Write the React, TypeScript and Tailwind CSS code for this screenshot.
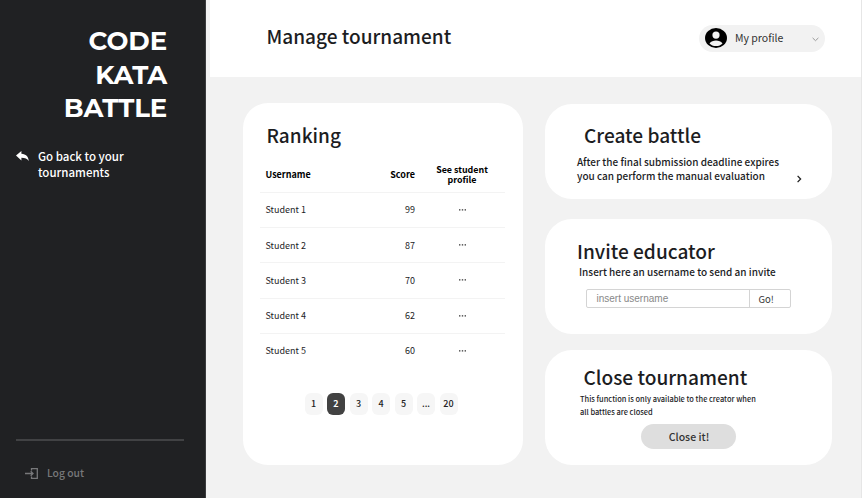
import type { ReactNode } from "react";

const students = [
  { name: "Student 1", score: 99 },
  { name: "Student 2", score: 87 },
  { name: "Student 3", score: 70 },
  { name: "Student 4", score: 62 },
  { name: "Student 5", score: 60 },
];

const pages = ["1", "2", "3", "4", "5", "...", "20"];

function Sidebar() {
  return (
    <aside className="flex h-full w-[206px] shrink-0 flex-col border-r border-[#3b3c3e] bg-[#202123]">
      <h1 className="pt-[25px] pr-[38px] text-right font-['Montserrat','Inter',sans-serif] text-[26px] leading-[33.5px] font-bold text-white">
        <div className="tracking-[-0.1px]">CODE</div>
        <div className="tracking-[-0.2px]">KATA</div>
        <div className="tracking-[-0.2px]">BATTLE</div>
      </h1>
      <a className="mt-[22px] flex pl-[16px] text-white">
        <svg className="mt-[3px] h-[11px] w-[13px]" viewBox="0 0 13 11" fill="currentColor">
          <path d="M0 4.6 5.4 0v2.7C10 3.1 12.3 5.3 12.8 10 11.2 7.6 9.1 6.7 5.4 6.7v2.8Z" />
        </svg>
        <span className="ml-[9px] text-[11.5px] leading-[16px] font-medium">
          Go back to your
          <br />
          tournaments
        </span>
      </a>
      <div className="mt-auto ml-[16px] h-[2px] w-[168px] bg-[#414244]" />
      <a className="mt-[23px] mb-[16px] flex h-[18px] items-center pl-[25px] text-[#77787a]">
        <svg className="h-[11px] w-[13px]" viewBox="0 0 13 11" fill="none" stroke="currentColor" strokeWidth="1.3">
          <path d="M0 5.5h8M5.7 3.2 8 5.5 5.7 7.8M6.5 2.5V.7h5.8v9.6H6.5V8.5" />
        </svg>
        <span className="ml-[9px] text-[10.3px] leading-[18px] font-medium">Log out</span>
      </a>
    </aside>
  );
}

function Header() {
  return (
    <header className="ml-[4px] flex h-[77px] shrink-0 items-start justify-between bg-white pr-[36px] pl-[56.5px]">
      <h2 className="pt-[21px] text-[19.05px] leading-[30px] font-medium">Manage tournament</h2>
      <button className="mt-[25px] flex h-[27px] w-[126px] items-center rounded-full bg-[#f2f2f2] pr-[6px] pl-[6px]">
        <svg className="-mt-px h-[20px] w-[22px]" viewBox="0 0 22 20" preserveAspectRatio="none">
          <ellipse cx="11" cy="10" rx="11" ry="10" fill="#000" />
          <circle cx="11" cy="7.1" r="3.6" fill="#f2f2f2" />
          <path d="M4.5 15.4c1.5-1.9 4-2.8 6.5-2.8s5 .9 6.5 2.8c-1.5 1.7-3.8 2.6-6.5 2.6s-5-.9-6.5-2.6Z" fill="#f2f2f2" />
        </svg>
        <span className="-mt-[2px] ml-[8px] text-[10.5px] leading-[18px] text-[#333]">My profile</span>
        <svg className="mt-px ml-auto h-[5px] w-[7px]" viewBox="0 0 7 5" fill="none" stroke="#999" strokeWidth="1">
          <path d="m.6.9 2.9 2.8L6.4.9" />
        </svg>
      </button>
    </header>
  );
}

function Dots() {
  return (
    <svg className="mx-auto h-[2px] w-[7px]" viewBox="0 0 7 2" fill="#333">
      <path d="M0 .3h1.4v1.3H0ZM2.8.3h1.4v1.3H2.8ZM5.6.3H7v1.3H5.6Z" />
    </svg>
  );
}

function Ranking() {
  return (
    <section className="flex h-[362px] w-[280px] flex-col rounded-[25px] bg-white">
      <h2 className="pt-[17px] pl-[23.5px] text-[19px] leading-[30px] font-medium">Ranking</h2>
      <div className="mt-[8px] ml-[17px] w-[245px] text-[9px]">
        <div className="grid h-[35px] grid-cols-[95px_60px_90px] items-center border-b border-[#f3f3f3] font-bold text-black">
          <span className="pl-[5.5px]">Username</span>
          <span className="text-right">Score</span>
          <span className="pl-[4px] text-center text-[8.9px] leading-[10px]">
            See student
            <br />
            profile
          </span>
        </div>
        {students.map((s) => (
          <div
            key={s.name}
            className="grid h-[35.2px] grid-cols-[95px_60px_90px] items-center border-b border-[#f3f3f3] last:border-transparent"
          >
            <span className="pl-[5.5px]">{s.name}</span>
            <span className="text-right">{s.score}</span>
            <span className="pl-[4px]">
              <Dots />
            </span>
          </div>
        ))}
      </div>
      <div className="mt-[24px] flex gap-[4.5px] pl-[61.5px]">
        {pages.map((p) => (
          <button
            key={p}
            className={
              p === "2"
                ? "h-[22px] w-[18px] rounded-[6px] bg-[#424242] text-[9px] font-bold text-white"
                : "h-[22px] w-[18px] rounded-[6px] bg-[#f6f6f6] text-[9px] font-medium text-[#222]"
            }
          >
            {p}
          </button>
        ))}
      </div>
    </section>
  );
}

function Card({ className, children }: { className: string; children: ReactNode }) {
  return <section className={`w-[287px] rounded-[27px] bg-white ${className}`}>{children}</section>;
}

export default function App() {
  return (
    <div className="flex h-[498px] w-[862px] overflow-hidden bg-[#f2f2f2] font-['Noto_Sans_CJK_SC',sans-serif] text-[#1c1d1f]">
      <Sidebar />
      <main className="flex min-w-0 flex-1 flex-col border-r border-[#e6e6e6]">
        <Header />
        <div className="flex pt-[26px] pl-[37px]">
          <Ranking />
          <div className="ml-[22px] flex flex-col pt-px">
            <Card className="h-[95px]">
              <h2 className="pt-[16px] pl-[39px] text-[19.1px] leading-[30px] font-medium">Create battle</h2>
              <div className="flex pt-[5px] pl-[32px]">
                <p className="w-[220px] text-[10px] leading-[14px] font-medium whitespace-nowrap">
                  After the final submission deadline expires
                  <br />
                  you can perform the manual evaluation
                </p>
                <svg className="mt-[20px] h-[8px] w-[5px]" viewBox="0 0 5 8" fill="none" stroke="#222" strokeWidth="1.3">
                  <path d="m.6.9 3 3.1-3 3.1" />
                </svg>
              </div>
            </Card>
            <Card className="mt-[20px] h-[115px]">
              <h2 className="pt-[17px] pl-[32px] text-[19.1px] leading-[30px] font-medium">Invite educator</h2>
              <p className="pl-[34px] text-[10px] leading-[12px] font-medium">Insert here an username to send an invite</p>
              <div className="mt-[11px] ml-[40.5px] flex h-[19px] w-[205px] rounded-[2px] border border-[#d4d4d4]">
                <span className="w-[163px] border-r border-[#d4d4d4] pl-[10px] font-['Liberation_Sans',sans-serif] text-[10px] leading-[18px] text-[#888]">
                  insert username
                </span>
                <button className="pl-[9px] text-[9.5px] leading-[12px] text-[#333]">Go!</button>
              </div>
            </Card>
            <Card className="mt-[16px] h-[115px]">
              <h2 className="pt-[12px] pl-[38.5px] text-[19.1px] leading-[30px] font-medium">Close tournament</h2>
              <p className="pl-[35px] text-[7.45px] leading-[13px] font-medium">
                This function is only available to the creator when
                <br />
                all battles are closed
              </p>
              <button className="mt-[6px] ml-[96px] block h-[25px] w-[95px] rounded-full bg-[#dedede] pt-px pl-px text-[10.5px] font-medium text-[#333]">
                Close it!
              </button>
            </Card>
          </div>
        </div>
      </main>
    </div>
  );
}
